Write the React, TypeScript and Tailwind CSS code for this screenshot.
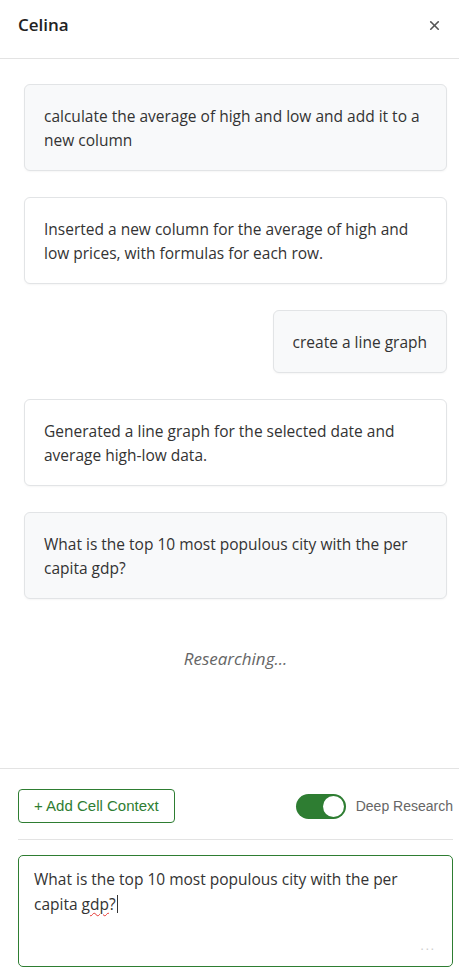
import { X } from 'lucide-react';

const messages = [
  { id: 1, role: 'user', text: 'calculate the average of high and low and add it to a new column' },
  { id: 2, role: 'assistant', text: 'Inserted a new column for the average of high and low prices, with formulas for each row.' },
  { id: 3, role: 'user', text: 'create a line graph', short: true },
  { id: 4, role: 'assistant', text: 'Generated a line graph for the selected date and average high-low data.' },
  { id: 5, role: 'user', text: 'What is the top 10 most populous city with the per capita gdp?' },
];

export default function App() {
  return (
    <div className="flex h-[967px] w-full flex-col overflow-hidden bg-white font-['Open_Sans',sans-serif] text-[#333]">
      <div className="flex h-[59px] shrink-0 items-center justify-between border-b border-[#e3e3e3] pb-[8px] pl-[18px] pr-[17px]">
        <h1 className="text-[17px] font-semibold text-[#222]">Celina</h1>
        <button className="text-[#555]">
          <X size={15} strokeWidth={2.6} />
        </button>
      </div>

      <div className="flex flex-1 flex-col gap-[26px] overflow-hidden pl-[24px] pr-[12px] pt-[25px]">
        {messages.map((m) => (
          <div key={m.id} className={m.short ? 'flex justify-end' : 'flex'}>
            <div
              className={`rounded-[6px] border border-[#e2e4e6] px-[19px] py-[18.5px] text-[15.5px] leading-[24px] shadow-[0_1px_2px_rgba(0,0,0,0.04)] ${
                m.role === 'user' ? 'bg-[#f8f9fa]' : 'bg-white'
              } ${m.short ? '' : 'w-full'}`}
            >
              {m.text}
            </div>
          </div>
        ))}
        <div className="pt-[21px] text-center text-[17px] italic text-[#666]">Researching...</div>
      </div>

      <div className="shrink-0 border-t border-[#e3e3e3] pl-[18px] pr-[6px] pt-[20px]">
        <div className="flex items-center justify-between">
          <button className="h-[34px] rounded-[4px] border border-[#2e7d32] px-[15px] font-['Liberation_Sans',sans-serif] text-[15px] text-[#2e7d32]">
            + Add Cell Context
          </button>
          <div className="flex items-center gap-[10px]">
            <div className="flex h-[25px] w-[50px] items-center justify-end rounded-full bg-[#2e7d32] px-[2px]">
              <div className="h-[21px] w-[21px] rounded-full bg-white" />
            </div>
            <span className="font-['Liberation_Sans',sans-serif] text-[14px] text-[#666]">Deep Research</span>
          </div>
        </div>
        <div className="mt-[16px] border-t border-[#e3e3e3]" />
        <div className="relative mt-[15px] h-[112px] rounded-[5px] border border-[#2e7d32] px-[15px] pt-[11px] text-[15.5px] leading-[25px] text-[#333]">
          What is the top 10 most populous city with the per capita{' '}
          <span className="underline decoration-[#e53935] decoration-wavy decoration-1 underline-offset-2">gdp</span>
          ?<span className="ml-px inline-block h-[18px] w-px translate-y-[3px] bg-[#333]" />
          <span className="absolute bottom-[8px] right-[16px] text-[12px] tracking-[2px] text-[#ccc]">...</span>
        </div>
      </div>
    </div>
  );
}
